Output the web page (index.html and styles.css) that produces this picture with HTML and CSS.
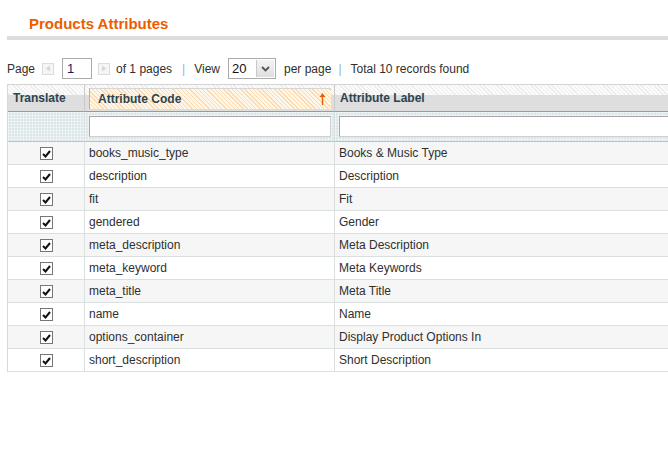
FILE: index.html
```html
<!DOCTYPE html>
<html>
<head>
<meta charset="utf-8">
<link rel="stylesheet" href="styles.css">
</head>
<body>
<div class="page">
  <div class="head">
    <h3 class="title">Products Attributes</h3>
  </div>
  <div class="bar"></div>

  <div class="pager">
    <span class="lbl">Page</span>
    <span class="navbtn prev"><svg width="6" height="7" viewBox="0 0 6 7"><path d="M5 0.5 L1 3.5 L5 6.5 Z" fill="#d6d6d6"/></svg></span>
    <span class="pageinput">1</span>
    <span class="navbtn next"><svg width="6" height="7" viewBox="0 0 6 7"><path d="M1 0.5 L5 3.5 L1 6.5 Z" fill="#d6d6d6"/></svg></span>
    <span class="lbl of">of 1 pages</span>
    <span class="sep">|</span>
    <span class="lbl view">View</span>
    <span class="select"><span class="selval">20</span><span class="selbtn"><svg width="9" height="6" viewBox="0 0 9 6"><path d="M1 1 L4.5 4.5 L8 1" fill="none" stroke="#555" stroke-width="1.8"/></svg></span></span>
    <span class="lbl perpage">per page</span>
    <span class="sep sep2">|</span>
    <span class="lbl total">Total 10 records found</span>
  </div>

  <div class="gridwrap">
    <table class="grid">
      <thead>
        <tr class="headings">
          <th class="c1"><span class="hlabel">Translate</span></th>
          <th class="c2 sorted"><div class="sortbox"><span class="hlabel">Attribute Code</span><svg class="arrow" width="7" height="13" viewBox="0 0 7 13"><path d="M3.5 1 L6.5 5 L4.2 5 L4.2 13 L2.8 13 L2.8 5 L0.5 5 Z" fill="#eb5e00"/></svg></div></th>
          <th class="c3"><span class="hlabel">Attribute Label</span></th>
        </tr>
        <tr class="filter">
          <th class="c1"></th>
          <th class="c2"><div class="finput"></div></th>
          <th class="c3"><div class="finput"></div></th>
        </tr>
      </thead>
      <tbody>
        <tr class="odd"><td class="c1"><span class="cb"><svg width="9" height="8" viewBox="0 0 9 8"><path d="M1 4 L3.5 6.5 L8 1" fill="none" stroke="#111" stroke-width="2"/></svg></span></td><td class="c2">books_music_type</td><td class="c3">Books &amp; Music Type</td></tr>
        <tr><td class="c1"><span class="cb"><svg width="9" height="8" viewBox="0 0 9 8"><path d="M1 4 L3.5 6.5 L8 1" fill="none" stroke="#111" stroke-width="2"/></svg></span></td><td class="c2">description</td><td class="c3">Description</td></tr>
        <tr class="odd"><td class="c1"><span class="cb"><svg width="9" height="8" viewBox="0 0 9 8"><path d="M1 4 L3.5 6.5 L8 1" fill="none" stroke="#111" stroke-width="2"/></svg></span></td><td class="c2">fit</td><td class="c3">Fit</td></tr>
        <tr><td class="c1"><span class="cb"><svg width="9" height="8" viewBox="0 0 9 8"><path d="M1 4 L3.5 6.5 L8 1" fill="none" stroke="#111" stroke-width="2"/></svg></span></td><td class="c2">gendered</td><td class="c3">Gender</td></tr>
        <tr class="odd"><td class="c1"><span class="cb"><svg width="9" height="8" viewBox="0 0 9 8"><path d="M1 4 L3.5 6.5 L8 1" fill="none" stroke="#111" stroke-width="2"/></svg></span></td><td class="c2">meta_description</td><td class="c3">Meta Description</td></tr>
        <tr><td class="c1"><span class="cb"><svg width="9" height="8" viewBox="0 0 9 8"><path d="M1 4 L3.5 6.5 L8 1" fill="none" stroke="#111" stroke-width="2"/></svg></span></td><td class="c2">meta_keyword</td><td class="c3">Meta Keywords</td></tr>
        <tr class="odd"><td class="c1"><span class="cb"><svg width="9" height="8" viewBox="0 0 9 8"><path d="M1 4 L3.5 6.5 L8 1" fill="none" stroke="#111" stroke-width="2"/></svg></span></td><td class="c2">meta_title</td><td class="c3">Meta Title</td></tr>
        <tr><td class="c1"><span class="cb"><svg width="9" height="8" viewBox="0 0 9 8"><path d="M1 4 L3.5 6.5 L8 1" fill="none" stroke="#111" stroke-width="2"/></svg></span></td><td class="c2">name</td><td class="c3">Name</td></tr>
        <tr class="odd"><td class="c1"><span class="cb"><svg width="9" height="8" viewBox="0 0 9 8"><path d="M1 4 L3.5 6.5 L8 1" fill="none" stroke="#111" stroke-width="2"/></svg></span></td><td class="c2">options_container</td><td class="c3">Display Product Options In</td></tr>
        <tr><td class="c1"><span class="cb"><svg width="9" height="8" viewBox="0 0 9 8"><path d="M1 4 L3.5 6.5 L8 1" fill="none" stroke="#111" stroke-width="2"/></svg></span></td><td class="c2">short_description</td><td class="c3">Short Description</td></tr>
      </tbody>
    </table>
  </div>
</div>
</body>
</html>
```

FILE: styles.css
```css
html, body {
  margin: 0;
  padding: 0;
  background: #fff;
  overflow: hidden;
}
body {
  font-family: "Liberation Sans", Arial, sans-serif;
  font-size: 12px;
  color: #2f2f2f;
}
.page {
  width: 668px;
}
.head {
  padding: 15px 0 0 29px;
}
.title {
  margin: 0;
  font-size: 15px;
  line-height: 18px;
  font-weight: bold;
  color: #eb5e00;
}
.bar {
  margin: 3px 0 0 7px;
  height: 4px;
  background: #dddddd;
}
.pager {
  display: flex;
  align-items: center;
  height: 21px;
  margin: 18px 0 0 7px;
  line-height: 14px;
}
.navbtn {
  box-sizing: border-box;
  width: 12px;
  height: 12px;
  border: 1px solid #dcdcdc;
  background: #f5f5f5;
  display: flex;
  align-items: center;
  justify-content: center;
}
.prev { margin-left: 7px; }
.next { margin-left: 6px; }
.pageinput {
  box-sizing: border-box;
  margin-left: 8px;
  width: 30px;
  height: 21px;
  border: 1px solid #aaaaaa;
  padding: 3px 0 0 4px;
  color: #1a1a6e;
  font-size: 13px;
}
.of { margin-left: 6px; }
.sep {
  color: #8fb4d9;
  margin-left: 10px;
}
.view { margin-left: 9px; }
.select {
  box-sizing: border-box;
  margin-left: 8px;
  width: 48px;
  height: 21px;
  border: 1px solid #aaaaaa;
  display: flex;
  background: #fff;
}
.selval {
  flex: 1;
  padding: 3px 0 0 3px;
  font-size: 13px;
  color: #111;
}
.selbtn {
  width: 17px;
  margin: 1px;
  background: linear-gradient(#f4f4f4, #dedede);
  border-left: 1px solid #c8c8c8;
  display: flex;
  align-items: center;
  justify-content: center;
}
.perpage { margin-left: 8px; }
.sep2 { margin-left: 7px; }
.total { margin-left: 9px; }

.gridwrap {
  margin: 5px 0 0 7px;
  width: 661px;
  overflow: hidden;
}
.grid {
  table-layout: fixed;
  border-collapse: separate;
  border-spacing: 0;
  width: 760px;
  border-left: 1px solid #d6d9da;
  border-top: 1px solid #d4d4d4;
}
.grid th, .grid td {
  padding: 0 4px;
  border-right: 1px solid #dadfe0;
  border-bottom: 1px solid #dadfe0;
  text-align: left;
  vertical-align: middle;
  white-space: nowrap;
}
.grid .c1 { width: 67px; }
.grid .c2 { width: 242px; }
.grid .c3 { width: auto; }

.headings th {
  height: 24px;
  padding-left: 5px;
  border-bottom: 1px solid #9a9a9a;
  border-right: 1px solid #c9c9c9;
  background:
    linear-gradient(to bottom, rgba(0,0,0,0) 0 10px, #dedede 10px 100%),
    repeating-linear-gradient(45deg, #ececec 0 1px, #fbfbfb 1px 3px);
  color: #2d444f;
  font-weight: bold;
}
.headings th.c3 {
  padding-left: 5px;
}
.headings th.sorted {
  padding: 1px 3px 1px 4px;
}
.sortbox {
  box-sizing: border-box;
  height: 21px;
  display: flex;
  align-items: center;
  justify-content: space-between;
  padding: 0 5px 0 8px;
  border-left: 1px solid #b5b5b5;
  border-top: 1px solid #d6d6d6;
  background: repeating-linear-gradient(45deg, #fbdcb2 0 1px, #fff6ea 1px 3px);
}
.arrow { display: block; }

.filter th {
  height: 29px;
  padding: 0 3px 0 4px;
  border-bottom: 1px solid #b9c6c9;
  border-right: 1px solid #d7dfe1;
  background-color: #dbe6e9;
  background-image:
    linear-gradient(90deg, rgba(255,255,255,0.45) 1px, transparent 1px),
    linear-gradient(rgba(255,255,255,0.45) 1px, transparent 1px);
  background-size: 3px 3px;
}
.finput {
  box-sizing: border-box;
  height: 21px;
  margin-top: -1px;
  border: 1px solid #a7a7a7;
  border-right-color: #cfcfcf;
  border-bottom-color: #cfcfcf;
  background: #fff;
}
.filter th.c3 { padding-left: 4px; }

tbody td {
  height: 22px;
  color: #2f2f2f;
  background: #fff;
}
tbody tr.odd td { background: #f6f6f6; }
tbody td.c1 { text-align: center; padding: 0; }
.cb {
  box-sizing: border-box;
  display: inline-flex;
  align-items: center;
  justify-content: center;
  width: 13px;
  height: 13px;
  border: 1px solid #767676;
  background: #fff;
  vertical-align: middle;
  margin-left: 1px;
}
.cb svg { display: block; }
```
